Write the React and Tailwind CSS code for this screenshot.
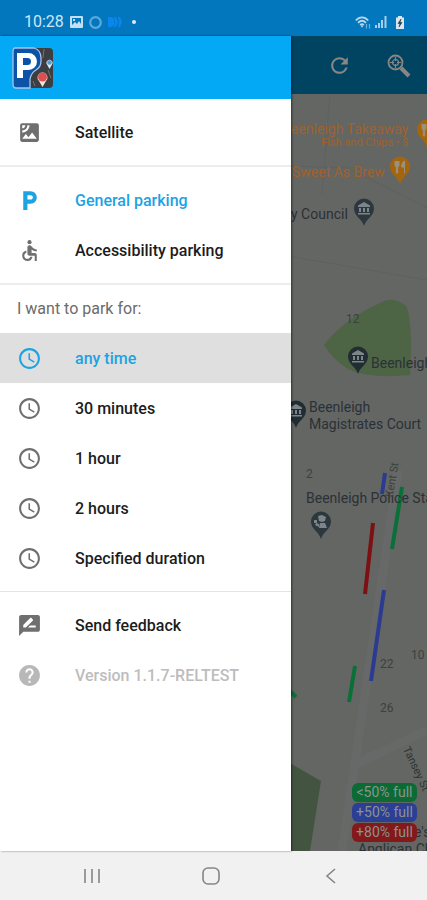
import {
  MdAccessible,
  MdHelp,
  MdLocalParking,
  MdOutlineSchedule,
  MdRateReview,
  MdRefresh,
  MdSatellite,
} from "react-icons/md";

const DURATIONS = ["any time", "30 minutes", "1 hour", "2 hours", "Specified duration"];

const LEGEND = [
  { label: "<50% full", className: "bg-[#0c6b35]" },
  { label: "+50% full", className: "bg-[#2b3f96]" },
  { label: "+80% full", className: "bg-[#84191c]" },
];

function StatusBar() {
  return (
    <header className="flex h-9 shrink-0 items-center bg-[#0277bd] pt-2 pr-5 pl-6 text-[#cfe6f5]">
      <span className="text-base">10:28</span>
      <svg className="ml-1.5" width="13" height="12" viewBox="0 0 13 12">
        <rect width="13" height="12" rx="1" fill="#c5dff0" />
        <path d="M2 2v8h9V2z" fill="#0277bd" />
        <path d="M2 9l3-3 2 2 2-3 2 3v2H2zM3 3h2v2H3z" fill="#c5dff0" />
      </svg>
      <svg className="ml-1.5" width="13" height="13" viewBox="0 0 13 13">
        <circle cx="6.500" cy="6.500" r="5.300" fill="none" stroke="#5fa9d8" strokeWidth="2.200" />
      </svg>
      <svg className="ml-1.5" width="14" height="12" viewBox="0 0 14 12">
        <path d="M0 1h4l2 2v6l-2 2H0zM6 1h2l2 5-2 5H6l1-5zM10 1h2l2 5-2 5h-2l1-5z" fill="#0a86ee" />
      </svg>
      <span className="ml-2.5 h-1 w-1 rounded-full bg-[#d9ecf8]" />
      <span className="flex-1" />
      <svg width="16" height="13" viewBox="0 0 16 13" fill="none" stroke="#b5d8ee">
        <path d="M.8 4.500C4.500.4 9.500.4 13.200 4.500M3 6.800c2.500-2.500 5.500-2.500 8 0M5.200 9c1.200-1.200 2.400-1.200 3.600 0" strokeWidth="1.800" />
        <path d="M7 11.800L5.500 9.500h3z" fill="#b5d8ee" stroke="none" />
        <path d="M11.500 8v4.500M14.500 8v4.500" strokeWidth="1.200" strokeOpacity=".6" />
      </svg>
      <svg className="ml-1" width="12" height="12" viewBox="0 0 12 12" fill="#a5cfea">
        <path d="M0 9h2v3H0zM3 7h2v5H3zM6 4h2v8H6zM9.500 0H11.500v12h-2z" />
      </svg>
      <svg className="mr-0.5 ml-2" width="10" height="13" viewBox="0 0 10 13">
        <path d="M3 0h4v1.500h2V13H1V1.500h2z" fill="#d9e8f0" />
        <path d="M6 3L3 7.500h2L4 11l3-4.500H5z" fill="#263a46" stroke="#263a46" strokeWidth=".6" />
      </svg>
    </header>
  );
}

function AppLogo() {
  return (
    <svg width="42" height="42" viewBox="0 0 42 42" role="img" aria-label="Parking">
      <rect x="1" y="1" width="40" height="40" rx="4" fill="#3c3e42" />
      <path d="M3 1H22q7 2 7 10v3q0 6-5 9t-6 9l0 9H4q-3 0-3-4V5q0-4 2-4z" fill="#0c53a8" stroke="#a9c4e6" strokeWidth="1.300" />
      <path d="M5 31V6h11.500a8 8 0 0 1 0 17H11v8M11 11v7h4.500a3.500 3.500 0 0 0 0-7z" fill="#fff" fillRule="evenodd" />
      <path d="M32 2l-1 9M36 23l3 8M21 34l2 5" stroke="#74736c" strokeWidth="1" />
      <path d="M30.500 40l-3.500-6a5 5 0 1 1 7 0z" fill="#efe5e2" />
      <circle cx="30.500" cy="30" r="4.500" fill="#dc5050" />
      <path d="M37.500 22l-2.200-4a3 3 0 1 1 4.400 0z" fill="#dce9f2" />
      <circle cx="37.500" cy="15.500" r="2.300" fill="#4f9bcf" />
    </svg>
  );
}

function MenuItem({ icon: Icon, label, active, highlighted, disabled }) {
  let color = "text-[#1c1c1c]";
  let iconColor = "text-[#6f6f6f]";
  if (active) {
    color = "text-[#1ba3e3]";
    iconColor = "text-[#1ba3e3]";
  }
  if (disabled) {
    color = "text-[#bdbdbd]";
    iconColor = "text-[#b8b8b8]";
  }
  return (
    <button
      type="button"
      disabled={disabled}
      className={`flex h-[50px] w-full items-center gap-[33px] pl-[17px] text-left text-base font-medium ${color} ${
        highlighted ? "bg-[#dfdfdf]" : ""
      }`}
    >
      <Icon size={25} className={`shrink-0 ${iconColor}`} />
      <span className="pt-0.5">{label}</span>
    </button>
  );
}

function Drawer() {
  return (
    <nav className="absolute inset-y-0 left-0 w-[68.2%] bg-white shadow-[1px_0_2px_rgba(0,0,0,0.5)]">
      <div className="flex h-[63px] items-center bg-[#03a9f4] pl-3">
        <AppLogo />
      </div>
      <div className="border-b-2 border-[#ededed] py-2">
        <MenuItem icon={MdSatellite} label="Satellite" />
      </div>
      <div className="border-b-2 border-[#ededed] py-2">
        <MenuItem icon={MdLocalParking} label="General parking" active />
        <MenuItem icon={MdAccessible} label="Accessibility parking" />
      </div>
      <div className="border-b border-[#e4e4e4] pb-2">
        <h2 className="flex h-12 items-center pl-[17px] text-base text-[#6b6b6b]">
          I want to park for:
        </h2>
        {DURATIONS.map((d, i) => (
          <MenuItem
            key={d}
            icon={MdOutlineSchedule}
            label={d}
            active={i === 0}
            highlighted={i === 0}
          />
        ))}
      </div>
      <div className="py-2">
        <MenuItem icon={MdRateReview} label="Send feedback" />
        <MenuItem icon={MdHelp} label="Version 1.1.7-RELTEST" disabled />
      </div>
    </nav>
  );
}

function Pin({ className, color, kind }) {
  return (
    <svg className={`absolute ${className}`} width="22" height="28" viewBox="0 0 22 28">
      <path d="M11 28C9 21 1 18 1 10.500a10 10 0 0 1 20 0C21 18 13 21 11 28z" fill={color} />
      {kind === "food" && (
        <path
          d="M6 5v4q0 2 1.300 2v6h1.400v-6Q10 11 10 9V5M8 5v4M15.500 17V5q-3 1-3 6h3"
          fill="#99917e"
          stroke="#99917e"
          strokeWidth="1"
        />
      )}
      {kind === "civic" && (
        <path
          d="M11 4L5 7.500V9h12V7.500zM6 10h2v4H6zM10 10h2v4h-2zM14 10h2v4h-2zM5 15h12v1.500H5z"
          fill="#7c858a"
        />
      )}
      {kind === "police" && (
        <path
          d="M8 5l4-1 4 2-1 4-3 1-3-1zM10 12h5l2 5H9zM4 9h3v3H4zM6 12l3 1v3l-4-2z"
          fill="#7c858a"
        />
      )}
    </svg>
  );
}

function ParkingMap() {
  return (
    <div className="relative flex-1 overflow-hidden bg-[#646664] text-sm whitespace-nowrap text-[#2b3136]">
      <svg className="absolute top-0 left-0" width="427" height="757" viewBox="0 94 427 757" fill="none">
        <path d="M288 256L427 280M288 166l60 2 79 40M330 94l-8 100" stroke="#5f6160" />
        <path d="M398 470L342 851M352 766l75-36" stroke="#676968" strokeWidth="9" />
        <path d="M324 345q20-26 56-42 14-8 27 4 6 20 3 68-42 4-62-6-16-10-24-24z" fill="#4d6545" />
        <path d="M288 762l33 19-11 70h-22z" fill="#435541" />
        <g strokeWidth="4">
          <path d="M385 473L382 494M384 590L371 681" stroke="#2b3b92" />
          <path d="M402 487L392 549M355 666L349 702M288 689l8 8" stroke="#087038" />
          <path d="M373 523L365 594" stroke="#7d1013" />
        </g>
      </svg>

      <div className="absolute top-[27px] left-[291px] text-right leading-4 text-[#a0622a]">
        eenleigh Takeaway
        <div className="text-[11px] leading-3">Fish and Chips • $</div>
      </div>
      <Pin className="top-[25px] left-[416px]" color="#a5650c" kind="food" />
      <span className="absolute top-[68px] left-[292px] text-[#a0622a]">Sweet As Brew</span>
      <Pin className="top-[62px] left-[389px]" color="#a5650c" kind="food" />
      <span className="absolute top-[110px] left-[291px]">y Council</span>
      <Pin className="top-[104px] left-[353px]" color="#2c373e" kind="civic" />

      <span className="absolute top-[217px] left-[346px] text-xs text-[#3c413d]">12</span>
      <Pin className="top-[252px] left-[347px]" color="#222d33" kind="civic" />
      <span className="absolute top-[259px] left-[371px]">Beenleigh</span>

      <Pin className="top-[306px] left-[285px]" color="#222d33" kind="civic" />
      <div className="absolute top-[305px] left-[309px] leading-[17px]">
        Beenleigh
        <br />
        Magistrates Court
      </div>

      <span className="absolute top-[372px] left-[306px] text-xs text-[#3c413d]">2</span>
      <span className="absolute top-[394px] left-[306px]">Beenleigh Police Station</span>
      <Pin className="top-[417px] left-[310px]" color="#2c373e" kind="police" />
      <span className="absolute top-[378px] left-[375px] -rotate-80 text-[11px] text-[#3c413d]">Kent St</span>

      <span className="absolute top-[553px] left-[411px] text-xs text-[#3c413d]">10</span>
      <span className="absolute top-[562px] left-[380px] text-xs text-[#3c413d]">22</span>
      <span className="absolute top-[606px] left-[380px] text-xs text-[#3c413d]">26</span>
      <span className="absolute top-[667px] left-[392px] rotate-65 text-[11px] text-[#2f3431]">Tansey St</span>
      <div className="absolute top-[730px] left-[358px] leading-[17px]">
        <span className="pl-14">e's</span>
        <br />
        Anglican Church
      </div>

      <ul className="absolute top-[689px] right-[10px] text-center text-sm text-[#8b938c]">
        {LEGEND.map((l) => (
          <li key={l.label} className={`mb-px h-[19px] w-[65px] rounded-md leading-[19px] ${l.className}`}>
            {l.label}
          </li>
        ))}
      </ul>
    </div>
  );
}

function SystemNav() {
  return (
    <footer className="flex h-[49px] shrink-0 items-center justify-around bg-[#f1f1f1] pr-9 pl-8 text-[#858585]">
      <button type="button" aria-label="Recent apps">
        <svg width="18" height="18" viewBox="0 0 18 18" stroke="currentColor" strokeWidth="1.600">
          <path d="M2 2v14M9 2v14M16 2v14" />
        </svg>
      </button>
      <button type="button" aria-label="Home">
        <svg width="18" height="18" viewBox="0 0 18 18" fill="none" stroke="currentColor" strokeWidth="1.600">
          <rect x="1" y="1" width="16" height="16" rx="5" />
        </svg>
      </button>
      <button type="button" aria-label="Back">
        <svg width="18" height="18" viewBox="0 0 18 18" fill="none" stroke="currentColor" strokeWidth="1.600">
          <path d="M13 2L5 9l8 7" />
        </svg>
      </button>
    </footer>
  );
}

export default function App() {
  return (
    <div className="flex min-h-screen flex-col font-['Roboto',sans-serif]">
      <StatusBar />
      <main className="relative flex flex-1 flex-col">
        <div className="flex h-[58px] items-center justify-end gap-[34px] bg-[#014462] pr-4 text-[#8a8581]">
          <button type="button" aria-label="Refresh">
            <MdRefresh size={25} />
          </button>
          <button type="button" aria-label="Find parking">
            <svg width="25" height="25" viewBox="0 0 25 25" fill="none" stroke="currentColor">
              <circle cx="9.500" cy="9.500" r="7" strokeWidth="1.800" />
              <path d="M15 15l8 8" strokeWidth="4" />
              <circle cx="9.500" cy="9.500" r="3" strokeWidth="1.200" />
              <path d="M9.500 4v4M9.500 11v4M4 9.500h4M11 9.500h4" strokeWidth="1.200" />
            </svg>
          </button>
        </div>
        <ParkingMap />
        <Drawer />
      </main>
      <SystemNav />
    </div>
  );
}
